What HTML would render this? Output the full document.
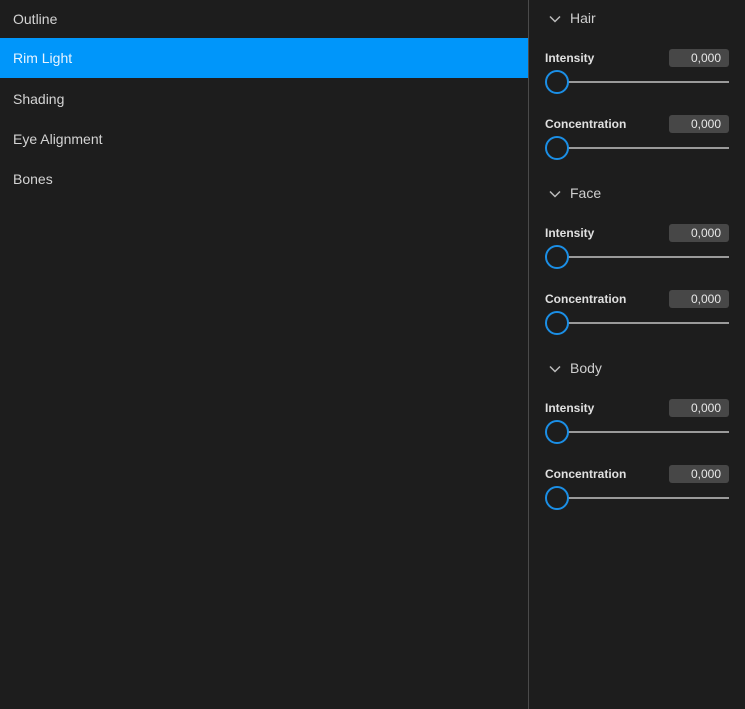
<!DOCTYPE html>
<html><head><style>
body{margin:0;width:745px;height:709px;background:#1d1d1d;font-family:"Liberation Sans",sans-serif;overflow:hidden;position:relative}
.item{position:absolute;left:0;width:528px;height:40px;line-height:40px;padding-left:13px;box-sizing:border-box;color:#d4d4d4;font-size:14px}
.sel{background:#0096fa;color:#e8f4ff}
.div{position:absolute;left:528px;top:0;width:1px;height:709px;background:#4a4a4a}
.hdr{position:absolute;left:549px;color:#cfcfcf;font-size:14px}
.hdr svg{position:absolute;left:0;top:5px}
.hdr span{position:absolute;left:21px;top:0;white-space:nowrap}
.lbl{position:absolute;left:545px;color:#e0e0e0;font-size:12px;font-weight:bold}
.val{position:absolute;left:669px;width:60px;height:18px;background:#474747;border-radius:3px;color:#e8e8e8;font-size:12px;text-align:right;line-height:18px;padding-right:8px;box-sizing:border-box}
.line{position:absolute;left:568px;width:161px;height:2px;background:#9a9a9a}
.knob{position:absolute;left:545px;width:20px;height:20px;border:2px solid #1b8fe6;border-radius:50%;background:#1d1d1d}
</style></head><body>
<div class="item" style="top:-1px">Outline</div>
<div class="item sel" style="top:38px;line-height:41px">Rim Light</div>
<div class="item" style="top:79px">Shading</div>
<div class="item" style="top:119px">Eye Alignment</div>
<div class="item" style="top:159px">Bones</div>
<div class="div"></div>
<div id="p"></div>
<script>
var names=["Hair","Face","Body"],h="";
for(var i=0;i<3;i++){var o=i*175;
h+='<div class="hdr" style="top:'+(10+o)+'px"><svg width="12" height="8"><path d="M1 1.5L6 6.5L11 1.5" stroke="#bbb" stroke-width="1.5" fill="none"/></svg><span>'+names[i]+'</span></div>';
[[0,"Intensity"],[66,"Concentration"]].forEach(function(r){var y=o+r[0];
h+='<div class="lbl" style="top:'+(51+y)+'px">'+r[1]+'</div>';
h+='<div class="val" style="top:'+(49+y)+'px">0,000</div>';
h+='<div class="line" style="top:'+(81+y)+'px"></div>';
h+='<div class="knob" style="top:'+(70+y)+'px"></div>';});}
document.getElementById("p").innerHTML=h;
</script>
</body></html>
